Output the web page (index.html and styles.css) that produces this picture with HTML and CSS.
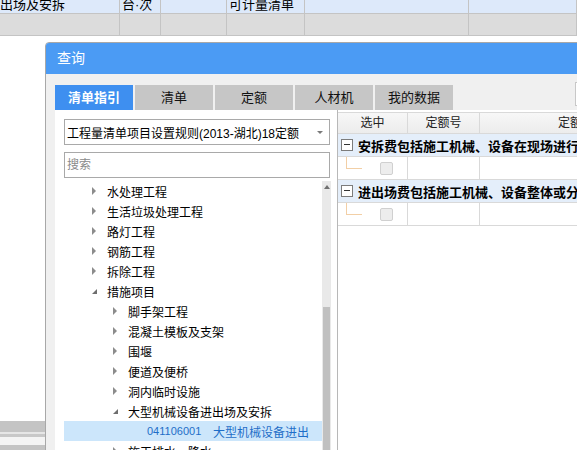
FILE: index.html
```html
<!DOCTYPE html>
<html>
<head>
<meta charset="utf-8">
<link rel="stylesheet" href="styles.css">
</head>
<body>
<div class="page">
  <div class="bg-table">
    <div class="bg-row bg-row-blue">
      <div class="bg-cell c1">出场及安拆</div>
      <div class="bg-cell c2">台·次</div>
      <div class="bg-cell c3"></div>
      <div class="bg-cell c4">可计量清单</div>
      <div class="bg-cell c5"></div>
      <div class="bg-cell c6"></div>
    </div>
    <div class="bg-row bg-row-gray">
      <div class="bg-cell c1"></div>
      <div class="bg-cell c2"></div>
      <div class="bg-cell c3"></div>
      <div class="bg-cell c4"></div>
      <div class="bg-cell c5"></div>
      <div class="bg-cell c6"></div>
    </div>
  </div>
  <div class="bg-stripes">
    <div class="stripe s1"></div>
    <div class="stripe s2"></div>
    <div class="stripe s3"></div>
    <div class="stripe s4"></div>
    <div class="stripe s5"></div>
  </div>

  <div class="dialog">
    <div class="titlebar">查询</div>
    <div class="dialog-body">
      <div class="tabs">
        <div class="tab active">清单指引</div>
        <div class="tab">清单</div>
        <div class="tab">定额</div>
        <div class="tab">人材机</div>
        <div class="tab">我的数据</div>
        <div class="tab-box"></div>
      </div>
      <div class="content">
        <div class="left-panel">
          <div class="select">
            <span class="select-text">工程量清单项目设置规则(2013-湖北)18定额</span>
            <span class="select-arrow"></span>
          </div>
          <div class="search">搜索</div>
          <div class="tree-wrap">
            <div class="tree">
              <div class="node l1"><span class="arr"></span><span>水处理工程</span></div>
              <div class="node l1"><span class="arr"></span><span>生活垃圾处理工程</span></div>
              <div class="node l1"><span class="arr"></span><span>路灯工程</span></div>
              <div class="node l1"><span class="arr"></span><span>钢筋工程</span></div>
              <div class="node l1"><span class="arr"></span><span>拆除工程</span></div>
              <div class="node l1"><span class="arr open"></span><span>措施项目</span></div>
              <div class="node l2"><span class="arr"></span><span>脚手架工程</span></div>
              <div class="node l2"><span class="arr"></span><span>混凝土模板及支架</span></div>
              <div class="node l2"><span class="arr"></span><span>围堰</span></div>
              <div class="node l2"><span class="arr"></span><span>便道及便桥</span></div>
              <div class="node l2"><span class="arr"></span><span>洞内临时设施</span></div>
              <div class="node l2"><span class="arr open"></span><span>大型机械设备进出场及安拆</span></div>
              <div class="node l3 selected"><span class="code">041106001</span><span>大型机械设备进出</span></div>
              <div class="node l2"><span class="arr"></span><span>施工排水、降水</span></div>
            </div>
            <div class="scrollbar">
              <div class="scroll-up"></div>
              <div class="scroll-thumb"></div>
            </div>
          </div>
        </div>
        <div class="right-panel">
          <div class="grid-row header">
            <div class="gc g1">选中</div>
            <div class="gc g2">定额号</div>
            <div class="gc g3">定额名称</div>
          </div>
          <div class="grid-row group">
            <span class="minus"></span>
            <span class="group-text">安拆费包括施工机械、设备在现场进行安装拆卸所需的人工</span>
          </div>
          <div class="grid-row child">
            <div class="gc g1"><span class="tline"></span><span class="check"></span></div>
            <div class="gc g2"></div>
            <div class="gc g3"></div>
          </div>
          <div class="grid-row group">
            <span class="minus"></span>
            <span class="group-text">进出场费包括施工机械、设备整体或分体自停放地点运至</span>
          </div>
          <div class="grid-row child">
            <div class="gc g1"><span class="tline"></span><span class="check"></span></div>
            <div class="gc g2"></div>
            <div class="gc g3"></div>
          </div>
        </div>
      </div>
    </div>
  </div>
</div>
</body>
</html>
```

FILE: styles.css
```css
* { box-sizing: border-box; }
html, body { margin: 0; padding: 0; }
body {
  width: 577px;
  height: 450px;
  overflow: hidden;
  background: #ffffff;
  font-family: "Liberation Sans", "Noto Sans CJK SC", sans-serif;
  font-size: 12px;
  color: #000;
}
.page { position: relative; width: 577px; height: 450px; overflow: hidden; }

/* background table */
.bg-table { display: flex; flex-direction: column; }
.bg-row { display: flex; }
.bg-row-blue { height: 14px; background: #dde9fa; border-bottom: 1px solid #c4c4c4; }
.bg-row-gray { height: 22px; background: #dcdcdc; border-bottom: 1px solid #c4c4c4; }
.bg-cell { border-right: 1px solid #c4c4c4; line-height: 12px; font-size: 13px; overflow: hidden; white-space: nowrap; padding-left: 2px; }
.bg-row-blue .bg-cell { padding-top: 0; line-height: 10px; }
.c1 { width: 120px; padding-left: 0; }
.c2 { width: 41px; }
.c3 { width: 66px; }
.c4 { width: 78px; }
.c5 { width: 164px; }
.c6 { width: 108px; }

.bg-stripes { position: absolute; left: 0; top: 421px; width: 46px; display: flex; flex-direction: column; }
.stripe { width: 46px; }
.s1 { height: 11px; background: #c4c4c4; }
.s2 { height: 2px; background: #e6e6e6; }
.s3 { height: 3px; background: #c8c8c8; }
.s4 { height: 8px; background: #f4f4f4; }
.s5 { height: 6px; background: #c4c4c4; }

/* dialog */
.dialog {
  position: absolute;
  left: 45px;
  top: 42px;
  width: 560px;
  height: 430px;
  border: 1px solid #a8a8a8;
  border-radius: 4px 4px 0 0;
  background: #f0f0f0;
  display: flex;
  flex-direction: column;
  overflow: hidden;
}
.titlebar {
  height: 31px;
  background: #4b9bf4;
  color: #fff;
  font-size: 14px;
  line-height: 31px;
  padding-left: 11px;
  flex: none;
}
.dialog-body { flex: 1; display: flex; flex-direction: column; padding: 11px 0 0 9px; }

.tabs { display: flex; gap: 2px; height: 25px; flex: none; }
.tab {
  width: 78px;
  height: 25px;
  background: #c6c6c6;
  text-align: center;
  line-height: 25px;
  font-size: 13px;
  color: #111;
  flex: none;
}
.tab.active { background: #3e8ff0; color: #fff; font-weight: bold; }
.tab-box {
  flex: none;
  margin-left: 120px;
  margin-top: -3px;
  width: 30px;
  height: 24px;
  background: #fff;
  border: 1px solid #c8c8c8;
}

.content { flex: 1; display: flex; gap: 0; min-height: 0; }

/* left */
.left-panel {
  flex: none;
  width: 282px;
  background: #fff;
  padding: 9px 0 0 9px;
  display: flex;
  flex-direction: column;
}
.select {
  width: 266px;
  height: 26px;
  border: 1px solid #a9a9a9;
  display: flex;
  align-items: center;
  padding-left: 2px;
  font-size: 12px;
  position: relative;
}
.select-text { flex: 1; white-space: nowrap; }
.select-arrow {
  width: 0; height: 0;
  border-left: 3px solid transparent;
  border-right: 3px solid transparent;
  border-top: 3px solid #7a7a7a;
  margin-right: 6px;
  margin-top: 1px;
}
.search {
  margin-top: 7px;
  width: 266px;
  height: 26px;
  border: 1px solid #a9a9a9;
  color: #8a8a8a;
  line-height: 24px;
  padding-left: 2px;
  font-size: 12px;
}
.tree-wrap { display: flex; margin-top: 3px; flex: 1; min-height: 0; }
.tree { width: 258px; flex: none; display: flex; flex-direction: column; }
.node { height: 20px; display: flex; align-items: center; white-space: nowrap; font-size: 12px; flex: none; }
.node.l1 { padding-left: 28px; }
.node.l2 { padding-left: 49px; }
.node.l3 { padding-left: 83px; }
.arr {
  width: 15px; height: 20px; position: relative; flex: none;
}
.arr::before {
  content: "";
  position: absolute;
  left: 0; top: 6px;
  width: 0; height: 0;
  border-top: 4px solid transparent;
  border-bottom: 4px solid transparent;
  border-left: 4px solid #8c8c8c;
}
.arr.open::before {
  left: 0; top: 8px;
  border-top: 0;
  border-left: 5px solid transparent;
  border-bottom: 5px solid #6e6e6e;
}
.selected { background: #cce6fb; color: #1f6ec8; }
.code { font-size: 11px; width: 66px; flex: none; }

.scrollbar {
  width: 9px;
  flex: none;
  background: #e9e9e9;
  position: relative;
  display: flex;
  flex-direction: column;
  align-items: center;
}
.scroll-up {
  margin-top: 4px;
  width: 0; height: 0;
  border-left: 3px solid transparent;
  border-right: 3px solid transparent;
  border-bottom: 4px solid #707070;
}
.scroll-thumb {
  margin-top: 118px;
  width: 7px;
  flex: 1;
  background: #c0c0c0;
}

/* right */
.right-panel {
  flex: 1;
  min-width: 0;
  background: #fff;
  border-left: 1px solid #b8b8b8;
  padding-top: 2px;
  display: flex;
  flex-direction: column;
  overflow: hidden;
}
.grid-row { display: flex; flex: none; }
.gc { border-right: 1px solid #d9d9d9; position: relative; flex: none; }
.g1 { width: 70px; }
.g2 { width: 72px; }
.g3 { width: 160px; }
.header {
  height: 22px;
  background: linear-gradient(#f7f7f7, #ececec);
  border-top: 1px solid #d9d9d9;
  border-bottom: 1px solid #d9d9d9;
  line-height: 20px;
  font-size: 12px;
  color: #222;
}
.header .gc { text-align: center; }
.header .g3 { text-align: left; padding-left: 78px; white-space: nowrap; overflow: hidden; }
.group {
  height: 23px;
  background: #e4eefa;
  border-bottom: 1px solid #d9d9d9;
  align-items: center;
  padding-left: 3px;
  white-space: nowrap;
  overflow: hidden;
}
.minus {
  width: 12px; height: 12px;
  border: 1px solid #7c7c7c;
  background: #fff;
  position: relative;
  flex: none;
  margin-right: 5px;
}
.minus::after {
  content: "";
  position: absolute;
  left: 2px; top: 4px;
  width: 6px; height: 1px;
  background: #333;
}
.group-text { font-weight: bold; font-size: 13px; letter-spacing: 0; }
.child { height: 23px; border-bottom: 1px solid #d9d9d9; }
.child .gc { height: 22px; }
.tline {
  position: absolute;
  left: 8px; top: 0;
  width: 16px; height: 12px;
  border-left: 1px solid #f2cfa6;
  border-bottom: 1px solid #f2cfa6;
}
.check {
  position: absolute;
  left: 42px; top: 5px;
  width: 13px; height: 13px;
  border: 1px solid #d0d0d0;
  border-radius: 2px;
  background: #ededed;
}
```
